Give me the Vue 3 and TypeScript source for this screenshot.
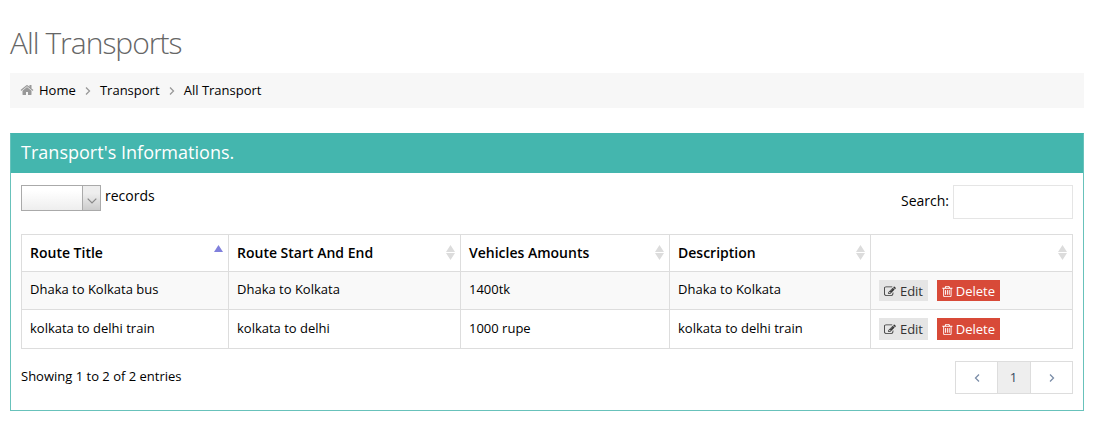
<script setup lang="ts">
interface Route {
  title: string
  path: string
  amount: string
  description: string
}

const columns: string[] = ['Route Title', 'Route Start And End', 'Vehicles Amounts', 'Description', '']

const routes: Route[] = [
  { title: 'Dhaka to Kolkata bus', path: 'Dhaka to Kolkata', amount: '1400tk', description: 'Dhaka to Kolkata' },
  { title: 'kolkata to delhi train', path: 'kolkata to delhi', amount: '1000 rupe', description: 'kolkata to delhi train' },
]
</script>

<template>
  <main class="page">
    <h1 class="title">All Transports</h1>
    <nav class="crumbs">
      <svg class="home" viewBox="0 0 1792 1792"><path d="M1472 992v480q0 26-19 45t-45 19h-384v-384h-256v384h-384q-26 0-45-19t-19-45v-480q0-1 .5-3t.5-3l575-474 575 474q1 2 1 6zm223-69l-62 74q-8 9-21 11h-3q-13 0-21-7l-692-577-692 577q-12 8-24 7-13-2-21-11l-62-74q-8-10-7-23.5t11-21.5l719-599q32-26 76-26t76 26l244 204v-195q0-14 9-23t23-9h192q14 0 23 9t9 23v408l219 182q10 8 11 21.5t-7 23.5z" /></svg>
      <a>Home</a>
      <svg class="sep" viewBox="0 0 6 8"><path d="M1 .5 4.5 4 1 7.5" /></svg>
      <a>Transport</a>
      <svg class="sep" viewBox="0 0 6 8"><path d="M1 .5 4.5 4 1 7.5" /></svg>
      <a>All Transport</a>
    </nav>

    <section class="portlet">
      <h2 class="portlet-title">Transport's Informations.</h2>
      <div class="portlet-body">
        <div class="toolbar">
          <div class="length">
            <div class="select">
              <span class="select-arrow">
                <svg viewBox="0 0 10 6"><path d="M.7 .7 5 5 9.3 .7" /></svg>
              </span>
            </div>
            <span>records</span>
          </div>
          <label class="search"><span>Search:</span><input type="text" /></label>
        </div>

        <table class="grid">
          <colgroup>
            <col class="c1" /><col class="c2" /><col class="c3" /><col class="c4" /><col class="c5" />
          </colgroup>
          <thead>
            <tr>
              <th v-for="(name, i) in columns" :key="i">
                <div class="head">
                  <span>{{ name }}</span>
                  <svg v-if="i === 0" class="sort asc" viewBox="0 0 9 15"><path d="M0 7 4.5 0 9 7z" /></svg>
                  <svg v-else class="sort" viewBox="0 0 9 15"><path d="M0 7 4.5 0 9 7zM0 8h9L4.5 15z" /></svg>
                </div>
              </th>
            </tr>
          </thead>
          <tbody>
            <tr v-for="route in routes" :key="route.title">
              <td>{{ route.title }}</td>
              <td>{{ route.path }}</td>
              <td>{{ route.amount }}</td>
              <td>{{ route.description }}</td>
              <td>
                <div class="actions">
                  <a class="btn edit">
                    <svg viewBox="0 0 1792 1792"><path d="M888 1184l116-116-152-152-116 116v56h96v96h56zm440-720q-16-16-33 1l-350 350q-17 17-1 33t33-1l350-350q17-17 1-33zm80 594v190q0 119-84.5 203.5t-203.5 84.5h-832q-119 0-203.5-84.5t-84.5-203.5v-832q0-119 84.5-203.5t203.5-84.5h832q63 0 117 25 15 7 18 23 3 17-9 29l-49 49q-14 14-32 8-23-6-45-6h-832q-66 0-113 47t-47 113v832q0 66 47 113t113 47h832q66 0 113-47t47-113v-126q0-13 9-22l64-64q15-15 35-7t20 29zm-96-738l288 288-672 672h-288v-288zm444 132l-92 92-288-288 92-92q28-28 68-28t68 28l152 152q28 28 28 68t-28 68z" /></svg>
                    <span>Edit</span>
                  </a>
                  <a class="btn delete">
                    <svg viewBox="192 0 1408 1792"><path d="M704 736v576q0 14-9 23t-23 9h-64q-14 0-23-9t-9-23v-576q0-14 9-23t23-9h64q14 0 23 9t9 23zm256 0v576q0 14-9 23t-23 9h-64q-14 0-23-9t-9-23v-576q0-14 9-23t23-9h64q14 0 23 9t9 23zm256 0v576q0 14-9 23t-23 9h-64q-14 0-23-9t-9-23v-576q0-14 9-23t23-9h64q14 0 23 9t9 23zm128 724v-948h-896v948q0 22 7 40.5t14.5 27 10.5 8.5h832q3 0 10.5-8.5t14.5-27 7-40.5zm-672-1076h448l-48-117q-7-9-17-11h-317q-10 2-17 11zm928 32v64q0 14-9 23t-23 9h-96v948q0 83-47 143.5t-113 60.5h-832q-66 0-113-58.5t-47-141.5v-952h-96q-14 0-23-9t-9-23v-64q0-14 9-23t23-9h309l70-167q15-37 54-63t79-26h320q40 0 79 26t54 63l70 167h309q14 0 23 9t9 23z" /></svg>
                    <span>Delete</span>
                  </a>
                </div>
              </td>
            </tr>
          </tbody>
        </table>

        <div class="footer">
          <span class="info">Showing 1 to 2 of 2 entries</span>
          <div class="pager">
            <a class="step"><svg viewBox="0 0 6 8"><path d="M5 .5 1.5 4 5 7.5" /></svg></a>
            <a class="current">1</a>
            <a class="step"><svg viewBox="0 0 6 8"><path d="M1 .5 4.5 4 1 7.5" /></svg></a>
          </div>
        </div>
      </div>
    </section>
  </main>
</template>

<style>
body {
  background: #fff;
}
</style>

<style scoped>
.page,
.page * {
  box-sizing: border-box;
}
.page {
  height: 423px;
  padding: 25px 15px 0 10px;
  overflow: hidden;
  font-family: "Open Sans", sans-serif;
  font-size: 13px;
  line-height: 18px;
  color: #000;
}
.title {
  margin: 0 0 12px;
  font-size: 30px;
  line-height: 36px;
  font-weight: 300;
  letter-spacing: -1px;
  color: #666;
}
.crumbs {
  display: flex;
  align-items: center;
  height: 35px;
  padding: 0 10px 2px;
  background: #f7f7f7;
}
.home {
  width: 14px;
  height: 14px;
  margin-right: 5px;
  fill: #999;
}
.sep {
  width: 6px;
  height: 8px;
  margin: 2px 8.6px 0 9.6px;
}
.sep path,
.step path {
  fill: none;
  stroke: #999;
  stroke-width: 1.3;
}
.portlet {
  height: 278px;
  margin-top: 25px;
  border: 1px solid #68c2bb;
  border-top-color: #44b6ae;
}
.portlet-title {
  height: 39px;
  margin: 0;
  padding: 0 10px;
  font-size: 18px;
  line-height: 36px;
  font-weight: 400;
  letter-spacing: 0.02px;
  color: #fff;
  background: #44b6ae;
}
.portlet-body {
  padding: 12px 10px 0;
}
.toolbar {
  display: flex;
  justify-content: space-between;
  height: 49px;
  font-size: 14px;
}
.length {
  display: flex;
  gap: 4px;
  height: 26px;
  line-height: 22px;
}
.select {
  display: flex;
  justify-content: flex-end;
  width: 80px;
  height: 26px;
  border: 1px solid #aaa;
  background: linear-gradient(#fff 20%, #eee);
}
.select-arrow {
  display: flex;
  justify-content: center;
  width: 18px;
  padding-top: 12px;
  border-left: 1px solid #aaa;
  background: linear-gradient(#eee 30%, #ccc);
}
.select-arrow svg {
  width: 10px;
  height: 6px;
}
.select-arrow path {
  fill: none;
  stroke: #888;
  stroke-width: 1.2;
}
.search {
  display: flex;
  gap: 4px;
  height: 34px;
  line-height: 32px;
}
.search input {
  width: 120px;
  height: 34px;
  padding: 6px 12px;
  border: 1px solid #e5e5e5;
  outline: 0;
}
.grid {
  width: 1052px;
  table-layout: fixed;
  border-collapse: separate;
  border-spacing: 0;
  border: solid #ddd;
  border-width: 1px 0 0 1px;
}
.c1 { width: 207px; }
.c2 { width: 232px; }
.c3 { width: 209px; }
.c4 { width: 201px; }
.c5 { width: 202px; }
.grid th,
.grid td {
  padding: 0 8px;
  border: solid #ddd;
  border-width: 0 1px 1px 0;
  text-align: left;
  vertical-align: top;
}
.grid th {
  height: 37px;
  padding-right: 5px;
  font-size: 14px;
  font-weight: 600;
}
.head {
  display: flex;
  justify-content: space-between;
  height: 36px;
  line-height: 36px;
}
.sort {
  width: 9px;
  height: 15px;
  margin-top: 10px;
  fill: #dcdcdc;
}
.sort.asc {
  fill: #8080dc;
}
.grid tbody td {
  height: 38px;
  padding-top: 8px;
}
.grid tbody tr:first-child td {
  background: #f9f9f9;
}
.grid tbody tr:last-child td {
  height: 39px;
  padding-top: 9px;
}
.actions {
  display: flex;
  gap: 9px;
}
.btn {
  display: flex;
  align-items: flex-start;
  gap: 4px;
  height: 21px;
  padding: 0 5px;
  line-height: 21px;
}
.btn span {
  padding-top: 1px;
}
.grid tbody tr:last-child .actions {
  margin-top: -1px;
}
.grid tbody tr:last-child .btn {
  height: 22px;
}
.btn svg {
  height: 13px;
  margin-top: 5px;
  fill: currentColor;
}
.edit {
  width: 49px;
  color: #333;
  background: #e5e5e5;
}
.edit svg {
  width: 13px;
}
.delete {
  width: 63px;
  gap: 3px;
  color: #fff;
  background: #d84a38;
}
.delete svg {
  width: 11px;
}
.footer {
  display: flex;
  justify-content: space-between;
  padding-top: 12px;
}
.info {
  line-height: 30px;
}
.pager {
  display: flex;
  width: 118px;
  height: 33px;
  border: 1px solid #ddd;
}
.pager a {
  display: flex;
  align-items: center;
  justify-content: center;
}
.step {
  width: 41px;
}
.step svg {
  width: 6px;
  height: 8px;
}
.step path {
  stroke: #7b8da8;
}
.pager .current {
  width: 34px;
  padding: 0 1px 2px 0;
  border: solid #ddd;
  border-width: 0 1px;
  color: #34495e;
  background: #eee;
}
</style>
